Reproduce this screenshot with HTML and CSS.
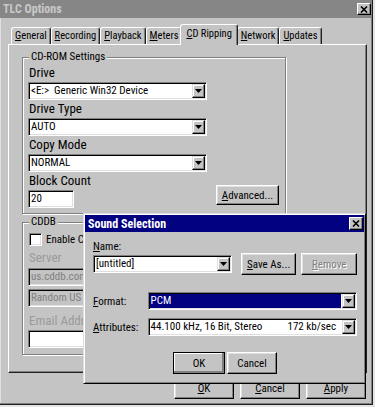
FILE: index.html
```html
<!DOCTYPE html>
<html lang="en">
<head>
  <meta charset="UTF-8" />
  <meta name="viewport" content="width=device-width, initial-scale=1.0"/>
  <title>TLC Options</title>
  <link rel="stylesheet" href="styles.css">
</head>
<body>
  <div class="window">
    <div class="titlebar">
      <span class="title">TLC Options</span>
      <span class="close-btn">
        <svg width="8" height="7" viewBox="0 0 8 7"><path d="M1 0.5L7 6.5M7 0.5L1 6.5" stroke="#000" stroke-width="1.6"/></svg>
      </span>
    </div>

    <div class="tabs">
      <div class="tab"><u>G</u>eneral</div>
      <div class="tab"><u>R</u>ecording</div>
      <div class="tab"><u>P</u>layback</div>
      <div class="tab"><u>M</u>eters</div>
      <div class="tab active"><u>C</u>D Ripping</div>
      <div class="tab"><u>N</u>etwork</div>
      <div class="tab"><u>U</u>pdates</div>
    </div>

    <div class="panel">
      <div class="group">
        <div class="group-title">CD-ROM Settings</div>

        <div class="field-label">Drive</div>
        <div class="combo">
          <span class="combo-text">&lt;E:&gt;&nbsp; Generic Win32 Device</span>
          <span class="drop-btn"><svg width="7" height="4" viewBox="0 0 7 4"><path d="M0 0h7L3.5 4z"/></svg></span>
        </div>

        <div class="field-label">Drive Type</div>
        <div class="combo">
          <span class="combo-text">AUTO</span>
          <span class="drop-btn"><svg width="7" height="4" viewBox="0 0 7 4"><path d="M0 0h7L3.5 4z"/></svg></span>
        </div>

        <div class="field-label">Copy Mode</div>
        <div class="combo">
          <span class="combo-text">NORMAL</span>
          <span class="drop-btn"><svg width="7" height="4" viewBox="0 0 7 4"><path d="M0 0h7L3.5 4z"/></svg></span>
        </div>

        <div class="block-row">
          <div>
            <div class="field-label">Block Count</div>
            <div class="edit short">20</div>
          </div>
          <button class="btn advanced"><u>A</u>dvanced...</button>
        </div>
      </div>

      <div class="group cddb">
        <div class="group-title">CDDB</div>
        <div class="check-row"><span class="checkbox"></span>Enable CDDB lookups</div>
        <div class="field-label disabled">Server</div>
        <div class="edit disabled">us.cddb.com</div>
        <div class="edit disabled spaced">Random US server</div>
        <div class="field-label disabled email">Email Address</div>
        <div class="edit"></div>
      </div>
    </div>

    <div class="actions">
      <button class="btn wide"><u>O</u>K</button>
      <button class="btn wide"><u>C</u>ancel</button>
      <button class="btn wide"><u>A</u>pply</button>
    </div>
  </div>

  <!-- floating sub-dialog over the options window -->
  <div class="dialog">
    <div class="titlebar active-title">
      <span class="title">Sound Selection</span>
      <span class="close-btn">
        <svg width="8" height="7" viewBox="0 0 8 7"><path d="M1 0.5L7 6.5M7 0.5L1 6.5" stroke="#000" stroke-width="1.6"/></svg>
      </span>
    </div>

    <div class="dialog-body">
      <div class="small-label"><u>N</u>ame:</div>
      <div class="name-row">
        <div class="combo name-combo">
          <span class="combo-text">[untitled]</span>
          <span class="drop-btn"><svg width="7" height="4" viewBox="0 0 7 4"><path d="M0 0h7L3.5 4z"/></svg></span>
        </div>
        <button class="btn save-as"><u>S</u>ave As...</button>
        <button class="btn remove" disabled><u>R</u>emove</button>
      </div>

      <div class="form-row format-row">
        <span class="row-label"><u>F</u>ormat:</span>
        <div class="combo wide-combo">
          <span class="combo-text selected">PCM</span>
          <span class="drop-btn"><svg width="7" height="4" viewBox="0 0 7 4"><path d="M0 0h7L3.5 4z"/></svg></span>
        </div>
      </div>

      <div class="form-row attr-row">
        <span class="row-label"><u>A</u>ttributes:</span>
        <div class="combo wide-combo">
          <span class="combo-text split"><span>44.100 kHz, 16 Bit, Stereo</span><span>172 kb/sec</span></span>
          <span class="drop-btn"><svg width="7" height="4" viewBox="0 0 7 4"><path d="M0 0h7L3.5 4z"/></svg></span>
        </div>
      </div>

      <div class="dialog-actions">
        <button class="btn default">OK</button>
        <button class="btn cancel">Cancel</button>
      </div>
    </div>
  </div>
</body>
</html>
```

FILE: styles.css
```css
* {
  box-sizing: border-box;
}

body {
  margin: 0;
  background: #e4e4e4;
  font-family: "Roboto Condensed", "Liberation Sans Narrow", Roboto, "Liberation Sans", sans-serif;
  font-stretch: condensed;
  font-size: 11px;
  color: #000;
}

u {
  text-decoration: underline;
  text-underline-offset: 1px;
}

.window {
  width: 373px;
  height: 405px;
  background: #c4c4c4;
  border-right: 1px solid #202020;
  border-bottom: 1px solid #202020;
  box-shadow: inset -1px -1px 0 #808080, inset 1px 0 0 #e0e0e0;
}

/* title bars */
.titlebar {
  display: flex;
  align-items: center;
  justify-content: space-between;
  height: 18px;
  padding: 0 1px 0 3px;
  background: #868686;
}

.title {
  font-weight: bold;
  font-size: 12px;
  color: #c8c8c8;
}

.close-btn {
  display: flex;
  align-items: center;
  justify-content: center;
  width: 14px;
  height: 12px;
  background: #c4c4c4;
  border: 1px solid;
  border-color: #fff #000 #000 #fff;
  box-shadow: inset -1px -1px 0 #808080;
}

/* tabs */
.tabs {
  display: flex;
  align-items: flex-end;
  height: 26px;
  padding-left: 11px;
}

.tab {
  height: 17px;
  line-height: 15px;
  padding: 0 3px;
  font-size: 10.5px;
  white-space: nowrap;
  border: 1px solid;
  border-bottom: none;
  border-color: #fff #202020 transparent #fff;
  border-radius: 3px 3px 0 0;
  box-shadow: inset -1px 0 0 #808080;
}

.tab.active {
  position: relative;
  z-index: 1;
  height: 21px;
  line-height: 18px;
  margin: 0 -1px -1px -2px;
  padding: 0 5px;
  background: #c4c4c4;
}

/* tab page */
.panel {
  width: 359px;
  height: 329px;
  margin-left: 8px;
  padding: 12px 0 0 13px;
  border: 1px solid;
  border-color: #fff #202020 #202020 #fff;
  box-shadow: inset -1px -1px 0 #808080;
}

.group {
  width: 264px;
  padding: 0 6px 5px 5px;
  border: 1px solid #808080;
  box-shadow: 1px 1px 0 #fff, inset 1px 1px 0 #fff;
}

.group.cddb {
  margin-top: 8px;
  padding-bottom: 6px;
}

.group-title {
  width: fit-content;
  height: 12px;
  line-height: 12px;
  margin: -7px 0 2px 1px;
  padding: 0 2px;
  background: #c4c4c4;
}

.field-label {
  height: 16px;
  line-height: 16px;
  margin-bottom: 1px;
  padding-left: 1px;
  font-size: 13px;
}

.field-label.disabled {
  margin-top: 3px;
  margin-bottom: 2px;
  color: #9a9a9a;
}

.field-label.email {
  margin-top: 6px;
  margin-bottom: 1px;
}

.combo {
  display: flex;
  width: 179px;
  height: 18px;
  margin-bottom: 1px;
  padding: 1px;
  background: #fff;
  border: 1px solid;
  border-color: #808080 #fff #fff #808080;
  box-shadow: inset 1px 1px 0 #000, inset -1px -1px 0 #dfdfdf;
}

.combo-text {
  flex: 1;
  line-height: 14px;
  padding-left: 1px;
  white-space: nowrap;
  overflow: hidden;
}

.combo-text.selected {
  margin-right: 1px;
  background: #000080;
  color: #fff;
}

.combo-text.split {
  display: flex;
  justify-content: space-between;
  padding-right: 6px;
}

.drop-btn {
  display: flex;
  align-items: center;
  justify-content: center;
  width: 13px;
  height: 14px;
  background: #c4c4c4;
  border: 1px solid;
  border-color: #dfdfdf #000 #000 #dfdfdf;
  box-shadow: inset -1px -1px 0 #808080, inset 1px 1px 0 #fff;
}

.edit {
  width: 179px;
  height: 18px;
  line-height: 14px;
  padding: 1px 2px;
  background: #fff;
  border: 1px solid;
  border-color: #808080 #fff #fff #808080;
  box-shadow: inset 1px 1px 0 #000, inset -1px -1px 0 #dfdfdf;
  white-space: nowrap;
  overflow: hidden;
}

.edit.short {
  width: 46px;
}

.edit.disabled {
  background: #c4c4c4;
  color: #808080;
}

.edit.spaced {
  margin-top: 3px;
}

.block-row {
  display: flex;
  align-items: flex-end;
  justify-content: space-between;
}

.check-row {
  display: flex;
  align-items: center;
  gap: 4px;
  height: 16px;
  margin-top: 3px;
  white-space: nowrap;
}

.checkbox {
  width: 13px;
  height: 13px;
  margin-left: 1px;
  background: #fff;
  border: 1px solid;
  border-color: #808080 #fff #fff #808080;
  box-shadow: inset 1px 1px 0 #000, inset -1px -1px 0 #dfdfdf;
}

/* buttons */
.btn {
  height: 22px;
  padding: 0;
  font: inherit;
  color: #000;
  background: #c4c4c4;
  border: 1px solid;
  border-color: #fff #000 #000 #fff;
  box-shadow: inset -1px -1px 0 #808080, inset 1px 1px 0 #dfdfdf;
}

.btn.advanced {
  width: 63px;
  height: 20px;
  margin-bottom: 3px;
}

.btn:disabled {
  color: #808080;
  text-shadow: 1px 1px 0 #fff;
}

.btn.default {
  width: 52px;
  border-color: #000;
  box-shadow: inset -2px -2px 0 #808080, inset 1px 1px 0 #fff;
}

.btn.cancel {
  width: 50px;
}

.actions {
  display: flex;
  justify-content: flex-end;
  gap: 6px;
  margin-top: 4px;
  padding-right: 6px;
}

.btn.wide {
  width: 60px;
}

/* Sound Selection dialog */
.dialog {
  position: absolute;
  left: 83px;
  top: 213px;
  width: 283px;
  height: 171px;
  padding: 1px;
  background: #c4c4c4;
  border: 1px solid;
  border-color: #dfdfdf #000 #000 #dfdfdf;
  box-shadow: inset 1px 1px 0 #fff, inset -1px -1px 0 #808080;
}

.active-title {
  height: 17px;
  background: #000080;
}

.active-title .title {
  color: #fff;
}

.active-title .close-btn {
  height: 13px;
}

.dialog-body {
  padding: 0 7px 0 8px;
}

.small-label {
  height: 12px;
  line-height: 12px;
  margin-top: 9px;
}

.name-row {
  display: flex;
  align-items: center;
  height: 22px;
}

.combo.name-combo {
  width: 140px;
  margin: 0;
}

.btn.save-as {
  width: 56px;
  margin-left: 9px;
}

.btn.remove {
  width: 56px;
  margin-left: 5px;
}

.form-row {
  display: flex;
  align-items: center;
}

.format-row {
  margin-top: 17px;
}

.attr-row {
  margin-top: 8px;
}

.row-label {
  width: 55px;
}

.combo.wide-combo {
  width: 211px;
  margin: 0;
}

.dialog-actions {
  display: flex;
  justify-content: center;
  gap: 2px;
  margin-top: 16px;
}
```
